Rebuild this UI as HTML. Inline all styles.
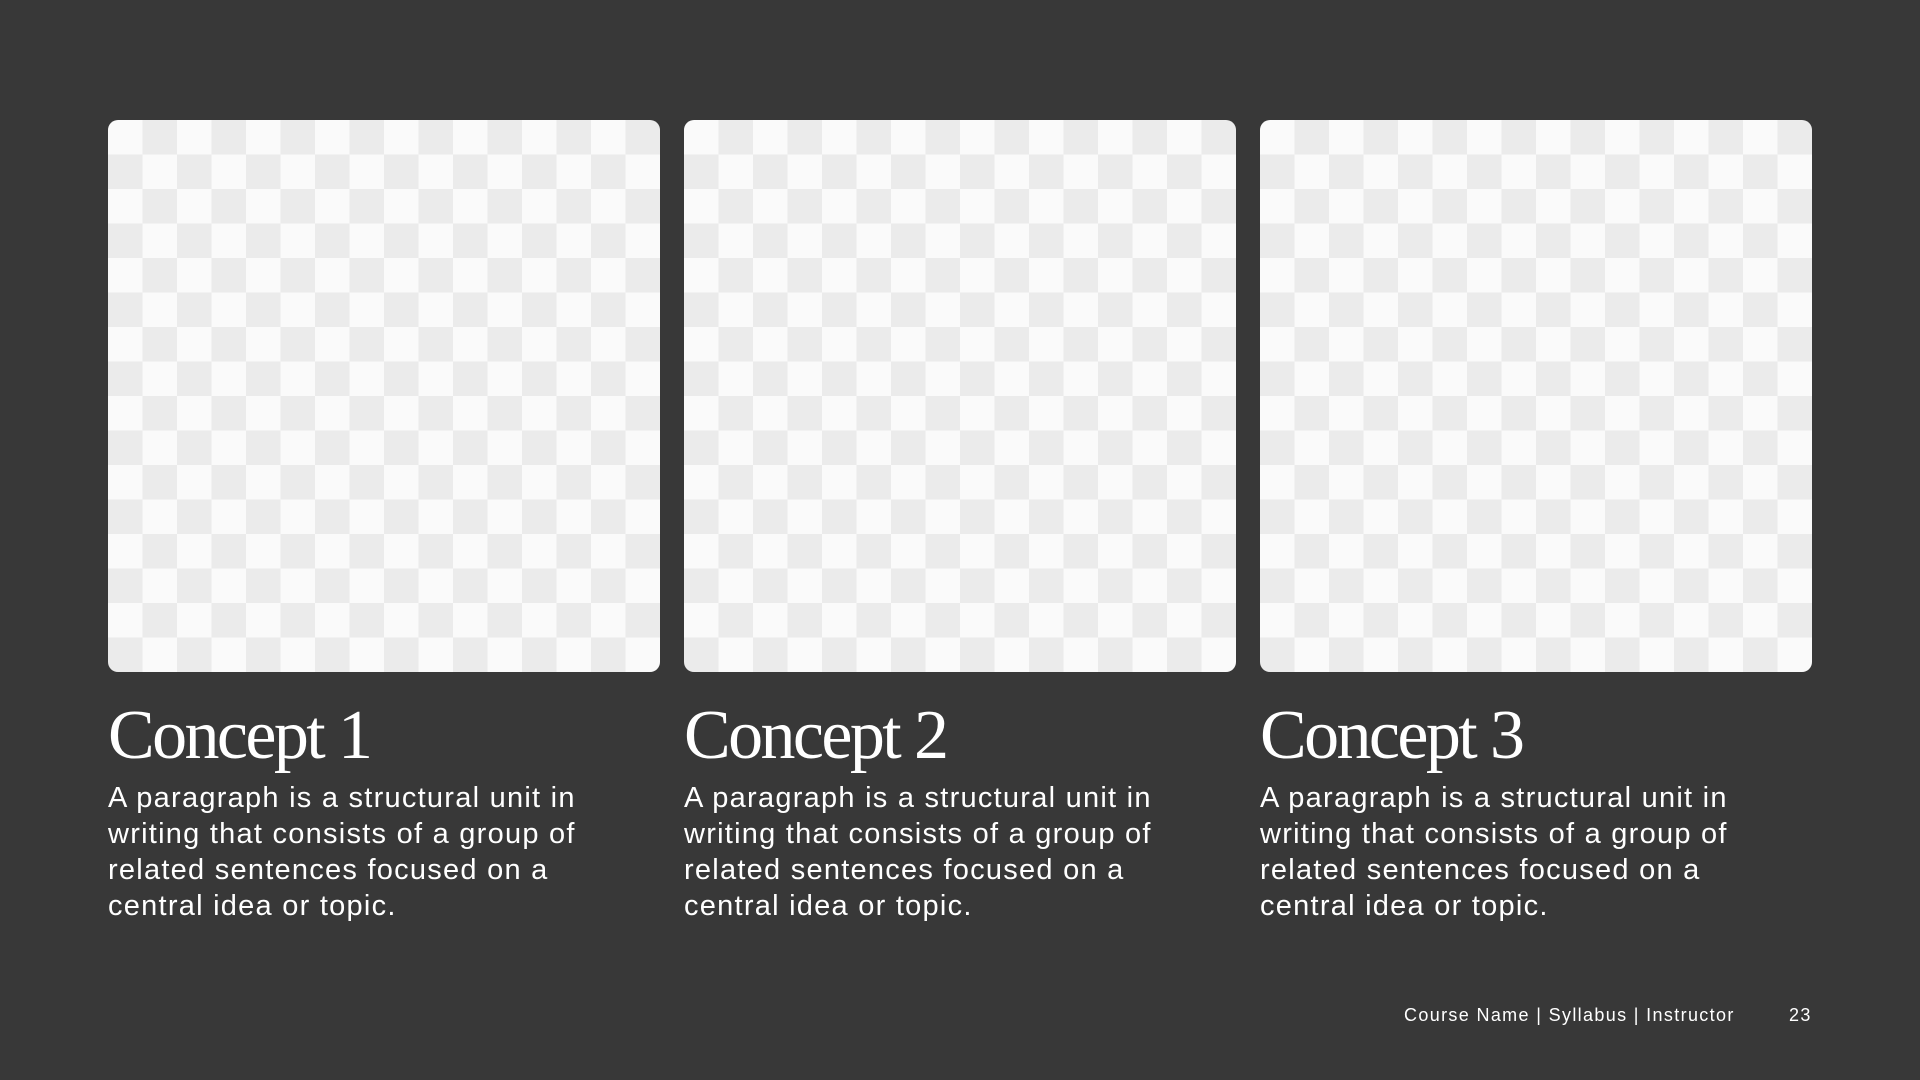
<!DOCTYPE html>
<html><head><style>
html,body{margin:0;padding:0}
body{width:1920px;height:1080px;background:#383838;position:relative;overflow:hidden;font-family:"Liberation Sans",sans-serif;color:#fff}
.card{position:absolute;top:120px;width:552px;height:552px;border-radius:10px;overflow:hidden;
background-color:#fafafa;
background-image:linear-gradient(45deg,#ebebeb 25%,transparent 25%,transparent 75%,#ebebeb 75%),linear-gradient(45deg,#ebebeb 25%,transparent 25%,transparent 75%,#ebebeb 75%);
background-size:69px 69px;background-position:0 0,34.5px 34.5px}
.t{position:absolute;top:696px;font-family:"Liberation Serif",serif;font-size:70px;letter-spacing:-2.6px;line-height:80px;white-space:nowrap}
.p{position:absolute;top:780px;width:500px;font-size:29px;line-height:36px;letter-spacing:1.25px}
.f{position:absolute;top:1005px;font-size:18px;letter-spacing:1.35px}
</style></head><body>
<div class="card" style="left:108px"></div>
<div class="card" style="left:684px"></div>
<div class="card" style="left:1260px"></div>
<div class="t" style="left:108px">Concept 1</div>
<div class="t" style="left:684px">Concept 2</div>
<div class="t" style="left:1260px">Concept 3</div>
<div class="p" style="left:108px">A paragraph is a structural unit in writing that consists of a group of related sentences focused on a central idea or topic.</div>
<div class="p" style="left:684px">A paragraph is a structural unit in writing that consists of a group of related sentences focused on a central idea or topic.</div>
<div class="p" style="left:1260px">A paragraph is a structural unit in writing that consists of a group of related sentences focused on a central idea or topic.</div>
<div class="f" style="left:1404px">Course Name | Syllabus | Instructor</div>
<div class="f" style="left:1789px">23</div>
</body></html>
